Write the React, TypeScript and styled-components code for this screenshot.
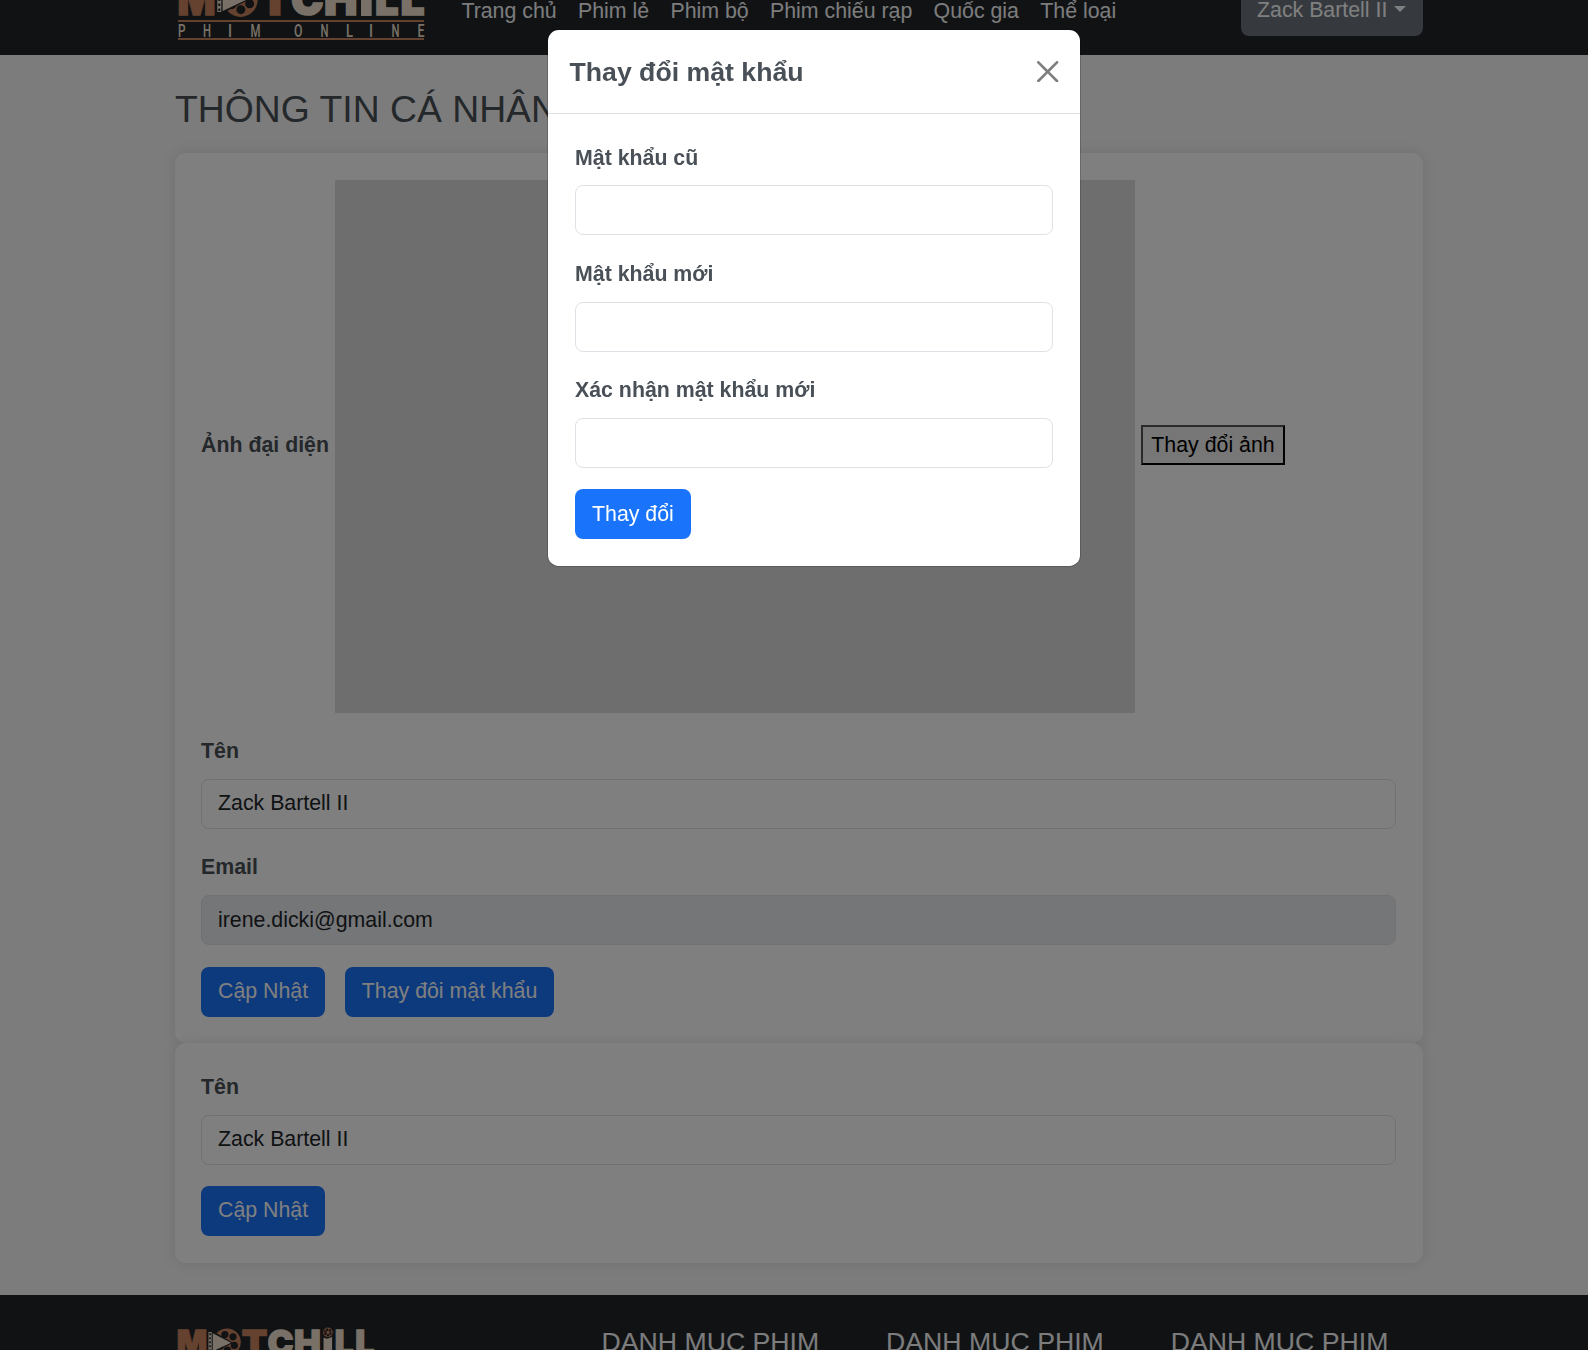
import React from "react";
import styled, { createGlobalStyle } from "styled-components";

const GlobalStyle = createGlobalStyle`
  *, *::before, *::after { box-sizing: border-box; }
  html { font-size: 21.333px; }
  body {
    margin: 0;
    overflow: hidden;
    background: #f8f8f8;
    color: #495057;
    font-family: "Liberation Sans", Arial, sans-serif;
    font-size: 1rem;
    line-height: 32px;
  }
`;

const Page = styled.div`
  height: 1350px;
  overflow: hidden;
  display: flex;
  flex-direction: column;
`;

const Header = styled.header`
  flex: none;
  height: 88px;
  margin-top: -33px;
  padding: 0 165px 0 178px;
  background: #212529;
  display: flex;
  align-items: center;
`;

const Nav = styled.nav`
  display: flex;
  gap: 21.33px;
  margin: -1px auto 0 37.4px;
`;

const NavLink = styled.a`
  color: #f8f9fa;
  text-decoration: none;
  white-space: nowrap;
`;

const Main = styled.main`
  flex: none;
  width: 1248px;
  margin-left: 175px;
  padding: 32px 0;
`;

const PageTitle = styled.h1`
  margin: 0 0 21.2px;
  font-size: 37.33px;
  line-height: 44.8px;
  font-weight: 400;
`;

const Card = styled.section`
  padding: 26.6px 27px 26.67px 26px;
  border-radius: 10.67px;
  background: #fff;
  box-shadow: 0 0 13.33px rgba(0, 0, 0, 0.1);
`;

const AvatarRow = styled.div`
  display: flex;
  align-items: center;
  gap: 6px;
  margin-bottom: 21.33px;
`;

const AvatarLabel = styled.label`
  font-weight: 700;
  width: 128px;
  white-space: nowrap;
  padding-bottom: 3px;
`;

const AvatarImage = styled.div`
  width: 800px;
  height: 533.33px;
  background: #dcdcdc;
`;

const FileButton = styled.button`
  height: 40px;
  width: 144px;
  margin-bottom: 3px;
  padding: 0;
  border: 2px outset #000;
  background: #efefef;
  color: #000;
  font: inherit;
  line-height: 32px;
  white-space: nowrap;
`;

const Field = styled.div`
  margin-bottom: 21.55px;
`;

const Label = styled.label`
  display: block;
  margin-bottom: 10.67px;
  font-weight: 700;
  line-height: 34px;
`;

const Input = styled.input`
  display: block;
  width: 100%;
  height: 50px;
  padding: 8px 16px;
  border: 1px solid #dee2e6;
  border-radius: 8px;
  background: ${(p) => (p.disabled ? "#e9ecef" : "#fff")};
  color: #212529;
  font: inherit;
  opacity: 1;
`;

const Buttons = styled.div`
  display: flex;
  gap: 20px;
`;

const Button = styled.button<{ $tone?: "primary" | "secondary" }>`
  height: 50px;
  padding: 0 16.7px 1.6px 17px;
  border: 0;
  border-radius: 8px;
  background: ${(p) => (p.$tone === "secondary" ? "#6c757d" : "#1a73fb")};
  color: #fff;
  font: inherit;
  white-space: nowrap;
  display: inline-flex;
  align-items: center;
`;

const UserButton = styled(Button)`
  width: 182px;
  padding: 0 0 3px 16px;
`;

const Caret = styled.span`
  margin: -2px 0 0 6.5px;
  border-top: 6px solid;
  border-left: 6px solid transparent;
  border-right: 6px solid transparent;
`;

const Footer = styled.footer`
  flex: 1 0 auto;
  padding: 31px 0 0 177px;
  background: #212529;
  display: flex;
  align-items: flex-start;
`;

const FooterLogo = styled.div`
  padding-top: 2.4px;
`;

const FooterColumns = styled.div`
  display: grid;
  grid-template-columns: repeat(3, 284.6px);
  margin-left: 227.5px;
`;

const FooterTitle = styled.h2`
  margin: 0;
  color: #f8f9fa;
  font-size: 26.67px;
  line-height: 32px;
  font-weight: 400;
  white-space: nowrap;
`;

const Backdrop = styled.div`
  position: fixed;
  inset: 0;
  padding: 30px 0 0 548px;
  background: rgba(0, 0, 0, 0.5);
`;

const Dialog = styled.div`
  width: 532px;
  border-radius: 10.67px;
  background: #fff;
  box-shadow: 0 0 0 1px rgba(0, 0, 0, 0.175);
`;

const DialogHeader = styled.div`
  height: 84px;
  padding: 0 21.5px;
  border-bottom: 1px solid #dee2e6;
  display: flex;
  align-items: center;
  justify-content: space-between;
`;

const DialogTitle = styled.h2`
  margin: 0;
  font-size: 26.67px;
  line-height: 40px;
  font-weight: 700;
`;

const CloseButton = styled.button`
  display: flex;
  padding: 0;
  border: 0;
  background: none;
  color: #000;
  opacity: 0.5;
`;

const DialogBody = styled.div`
  display: flex;
  flex-direction: column;
  padding: 26.7px 27px 26.67px;

  > ${Button} {
    align-self: flex-start;
  }
`;

const LogoSvg = styled.svg`
  flex: none;
  display: block;
  overflow: visible;
`;

const ORANGE = "#ca835e";
const CREAM = "#f2e2d0";

const wordmark = [
  { char: "M", x: 0.5, width: 36, color: ORANGE },
  { char: "T", x: 82, width: 30, color: ORANGE },
  { char: "C", x: 114, width: 30.5, color: CREAM },
  { char: "H", x: 147, width: 31.5, color: CREAM },
  { char: "L", x: 198, width: 21.5, color: CREAM },
  { char: "L", x: 223.5, width: 22, color: CREAM },
];

const tagline: [string, number, number][] = [
  ["P", 0, 7.5], ["H", 25, 8], ["I", 50, 4], ["M", 72.5, 10], ["O", 116, 8.5],
  ["N", 142.5, 8], ["L", 168, 7], ["I", 191, 4], ["N", 213.5, 8], ["E", 239.5, 7],
];

const wheelHoles = [88, 24, -42, -106, 150, 200];

function Reel({ cx, cy, r }: { cx: number; cy: number; r: number }) {
  return (
    <g>
      <circle cx={cx} cy={cy} r={r} fill={ORANGE} />
      {wheelHoles.map((deg) => {
        const a = (deg * Math.PI) / 180;
        return (
          <circle
            key={deg}
            cx={cx + Math.cos(a) * r * 0.58}
            cy={cy + Math.sin(a) * r * 0.58}
            r={r * 0.26}
            fill="#212529"
          />
        );
      })}
    </g>
  );
}

function Logo({ width }: { width: number }) {
  return (
    <LogoSvg width={width} height={(width * 58) / 246} viewBox="0 0 246 58">
      {wordmark.map((l, i) => (
        <text
          key={i}
          x={l.x - 1}
          y={33.4}
          textLength={l.width + 2}
          lengthAdjust="spacingAndGlyphs"
          fill={l.color}
          stroke={l.color}
          strokeWidth={1.6}
          fontFamily="Inter, sans-serif"
          fontWeight={900}
          fontSize={43.5}
        >
          {l.char}
        </text>
      ))}
      <path d="M183 12 Q188 15 193.7 11 V34 H183Z" fill={CREAM} />
      <Reel cx={188.5} cy={5.5} r={6} />
      <Reel cx={62.5} cy={17.7} r={17.2} />
      <path d="M38 4 H45 L70 18.3 L45 31 H38Z" fill="#212529" />
      <path d="M44.6 6.5 L67.5 18.3 L44.6 29Z" fill={CREAM} />
      <path d="M41.3 5 V30" stroke={CREAM} strokeWidth={4} />
      <path d="M41.3 6.5 V29" stroke="#212529" strokeWidth={2} strokeDasharray="2.6 2.4" />
      <rect x={0} y={38} width={246} height={2} fill={ORANGE} />
      <rect x={0} y={56} width={246} height={2} fill={ORANGE} />
      {tagline.map(([char, x, w], i) => (
        <text
          key={i}
          x={x}
          y={54.5}
          textLength={w}
          lengthAdjust="spacingAndGlyphs"
          fill={CREAM}
          fontFamily="Roboto, sans-serif"
          fontWeight={500}
          fontSize={18.3}
        >
          {char}
        </text>
      ))}
    </LogoSvg>
  );
}

function TextField({ label, value, type = "text", disabled }: {
  label: string;
  value?: string;
  type?: string;
  disabled?: boolean;
}) {
  return (
    <Field>
      <Label>{label}</Label>
      <Input type={type} defaultValue={value} disabled={disabled} />
    </Field>
  );
}

const links = ["Trang chủ", "Phim lẻ", "Phim bộ", "Phim chiếu rạp", "Quốc gia", "Thể loại"];

export default function App() {
  return (
    <>
      <GlobalStyle />
      <Page>
        <Header>
          <Logo width={246} />
          <Nav>
            {links.map((l) => (
              <NavLink key={l}>{l}</NavLink>
            ))}
          </Nav>
          <UserButton $tone="secondary">
            Zack Bartell II
            <Caret />
          </UserButton>
        </Header>
        <Main>
          <PageTitle>THÔNG TIN CÁ NHÂN</PageTitle>
          <Card>
            <AvatarRow>
              <AvatarLabel>Ảnh đại diện</AvatarLabel>
              <AvatarImage />
              <FileButton>Thay đổi ảnh</FileButton>
            </AvatarRow>
            <TextField label="Tên" value="Zack Bartell II" />
            <TextField label="Email" value="irene.dicki@gmail.com" disabled />
            <Buttons>
              <Button>Cập Nhật</Button>
              <Button>Thay đôi mật khẩu</Button>
            </Buttons>
          </Card>
          <Card>
            <TextField label="Tên" value="Zack Bartell II" />
            <Buttons>
              <Button>Cập Nhật</Button>
            </Buttons>
          </Card>
        </Main>
        <Footer>
          <FooterLogo>
            <Logo width={197} />
          </FooterLogo>
          <FooterColumns>
            <FooterTitle>DANH MỤC PHIM</FooterTitle>
            <FooterTitle>DANH MỤC PHIM</FooterTitle>
            <FooterTitle>DANH MỤC PHIM</FooterTitle>
          </FooterColumns>
        </Footer>
      </Page>
      <Backdrop>
        <Dialog role="dialog">
          <DialogHeader>
            <DialogTitle>Thay đổi mật khẩu</DialogTitle>
            <CloseButton aria-label="Close">
              <svg width="21.33" height="21.33" viewBox="0 0 16 16" fill="currentColor">
                <path d="M.293.293a1 1 0 0 1 1.414 0L8 6.586 14.293.293a1 1 0 1 1 1.414 1.414L9.414 8l6.293 6.293a1 1 0 0 1-1.414 1.414L8 9.414l-6.293 6.293a1 1 0 0 1-1.414-1.414L6.586 8 .293 1.707a1 1 0 0 1 0-1.414z" />
              </svg>
            </CloseButton>
          </DialogHeader>
          <DialogBody>
            <TextField label="Mật khẩu cũ" type="password" />
            <TextField label="Mật khẩu mới" type="password" />
            <TextField label="Xác nhận mật khẩu mới" type="password" />
            <Button>Thay đổi</Button>
          </DialogBody>
        </Dialog>
      </Backdrop>
    </>
  );
}
